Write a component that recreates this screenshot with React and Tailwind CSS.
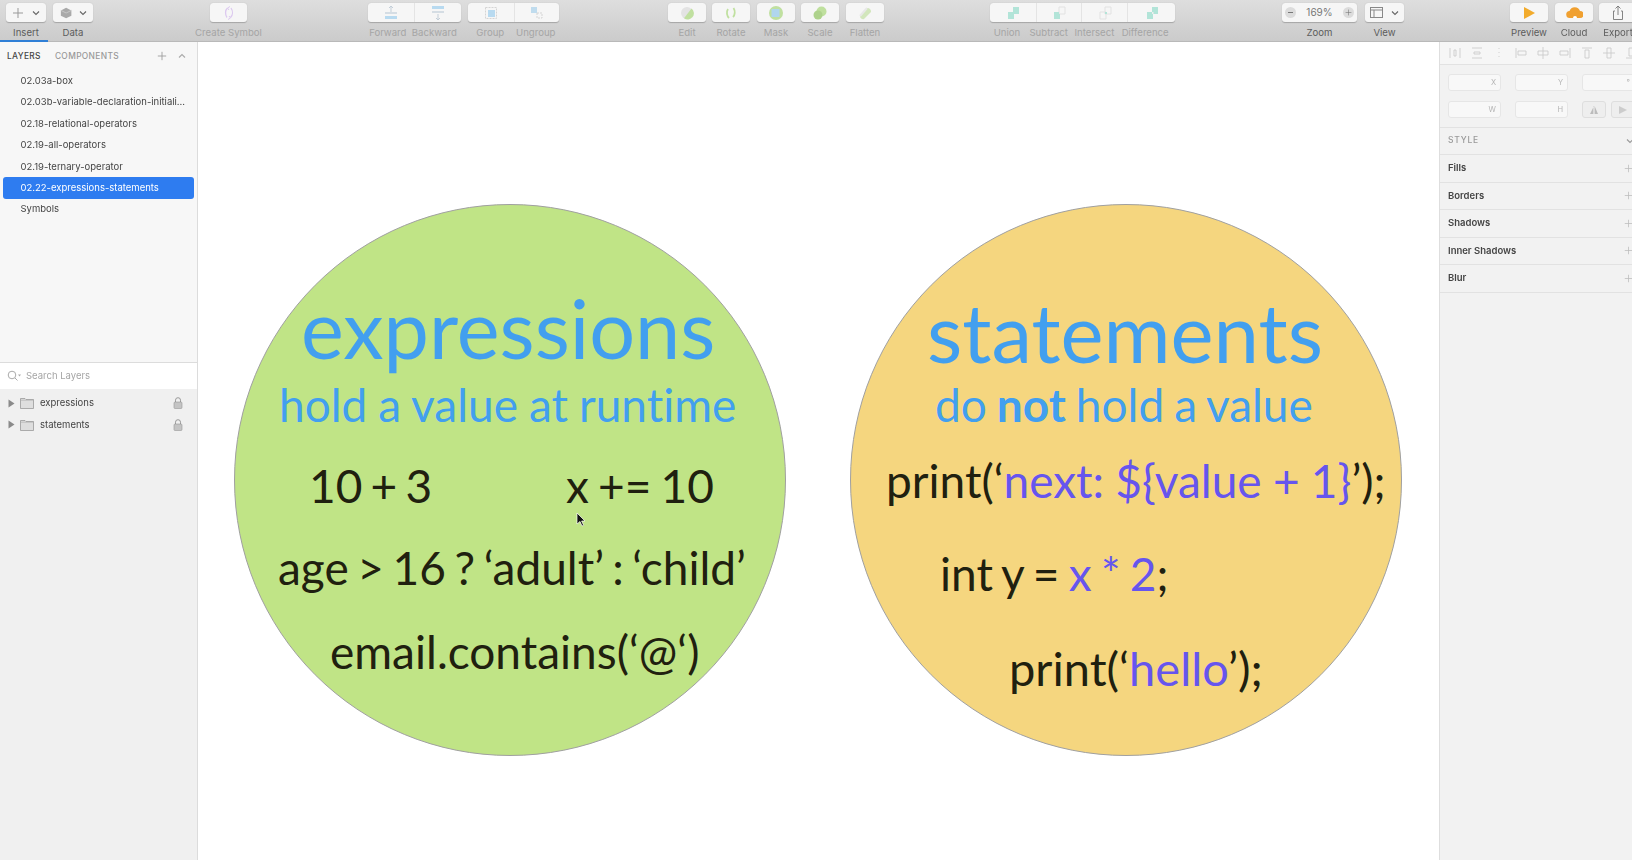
import React from "react";

const Chev = ({ c = "#666", up = false }) => (
  <svg width="8" height="6" viewBox="0 0 8 6"><path d={up ? "M1 4.5l3-3 3 3" : "M1 1.5l3 3 3-3"} fill="none" stroke={c} strokeWidth="1.1" /></svg>
);
const Plus = ({ s = 12, c = "#aaa" }) => (
  <svg width={s} height={s} viewBox="0 0 12 12"><path d="M6 1v10M1 6h10" stroke={c} strokeWidth="1" /></svg>
);
const Shape = ({ children, w = 16 }) => (
  <svg width={w} height="16" viewBox="0 0 16 16">{children}</svg>
);
const Lock = () => (
  <svg width="10" height="12" viewBox="0 0 10 12"><path d="M2.5 5V3.2a2.5 2.5 0 0 1 5 0V5" fill="none" stroke="#999" /><rect x="1" y="5" width="8" height="6.5" rx="1" fill="#c4c4c4" stroke="#999" strokeWidth="0.6" /></svg>
);
const Folder = () => (
  <svg width="14" height="12" viewBox="0 0 14 12"><path d="M0.5 1.5h4.5l1 1h7.5v9h-13z" fill="#dedede" stroke="#9a9a9a" strokeWidth="0.8" /><path d="M0.5 3.2h13" stroke="#aaa" strokeWidth="0.6" /></svg>
);
const Tri = () => (
  <svg width="7" height="9" viewBox="0 0 7 9"><path d="M0.5 0.5l6 4-6 4z" fill="#8a8a8a" /></svg>
);
const Cell = ({ className = "", children }) => (
  <div className={`h-full flex items-center justify-center border-r border-[#e4e4e4] last:border-r-0 ${className}`}>{children}</div>
);

// A toolbar item: the button on top, its label(s) underneath.
const Tool = ({ className = "", btn = "justify-center", labels, dark = false, children }) => (
  <div className={`shrink-0 flex flex-col ${className}`}>
    <div className={`h-[19px] bg-[#f6f6f6] rounded-[3px] shadow-[0_0.5px_1px_rgba(0,0,0,0.22)] flex items-center ${btn}`}>
      {children}
    </div>
    <div className={`flex mt-[5px] text-[9.6px] leading-[12px] whitespace-nowrap ${dark ? "text-[#5c5c5c]" : "text-[#a5a5a5]"}`}>
      {labels.map(([t, w]) => (
        <div key={t} className={`flex justify-center min-w-0 ${w || "flex-1"}`}>{t}</div>
      ))}
    </div>
  </div>
);

function Toolbar() {
  return (
    <div className="relative h-[42px] shrink-0 bg-gradient-to-b from-[#dedede] to-[#cbcbcb] border-b border-[#b9b9b9] font-['Inter',sans-serif] [filter:blur(0.35px)]">
      <div className="flex items-start pt-[3px] pl-[6px]">
        <Tool className="w-[40px]" btn="justify-center gap-[8px]" dark labels={[["Insert"]]}><Plus c="#999" /><Chev /></Tool>
        <Tool className="w-[40px] ml-[7px]" btn="justify-center gap-[5px]" dark labels={[["Data"]]}>
          <Shape w={14}><path d="M7 2l6 3v6l-6 3-6-3V5z" fill="#a9a9a9" /><path d="M1 5l6 3 6-3" fill="none" stroke="#c9c9c9" /></Shape>
          <Chev />
        </Tool>
        <Tool className="w-[37px] ml-[117px]" labels={[["Create Symbol"]]}>
          <Shape><path d="M6.5 3C4 5 4 10 6 12.5M9.5 12.5C12 10 12 6 10 3" fill="none" stroke="#dcc9ef" strokeWidth="1.3" /><path d="M9 1.5l-2.5 1.5L8 5M7 14.5l2.5-1.5L8 11" fill="none" stroke="#dcc9ef" /></Shape>
        </Tool>
        <Tool className="w-[93px] ml-[121px]" labels={[["Forward", "w-[40px]"], ["Backward", "w-[54px]"]]}>
          <Cell className="w-[47px]">
            <Shape><path d="M8 1v6M6 3l2-2 2 2" fill="none" stroke="#c3ced8" /><rect x="2" y="7" width="12" height="2" fill="#d5dde4" /><rect x="2" y="11" width="12" height="3" fill="#b8daf0" /></Shape>
          </Cell>
          <Cell className="flex-1">
            <Shape><rect x="2" y="1" width="12" height="3" fill="#b8daf0" /><rect x="2" y="6" width="12" height="2" fill="#d5dde4" /><path d="M8 9v6M6 13l2 2 2-2" fill="none" stroke="#c3ced8" /></Shape>
          </Cell>
        </Tool>
        <Tool className="w-[91px] ml-[7px]" labels={[["Group", "w-[46px]"], ["Ungroup", "w-[48px]"]]}>
          <Cell className="w-[47px]">
            <Shape><rect x="2.5" y="2.5" width="11" height="11" fill="none" stroke="#d4d4d4" strokeDasharray="2 1" /><rect x="5" y="5" width="7" height="7" fill="#b8daf0" /></Shape>
          </Cell>
          <Cell className="flex-1">
            <Shape><rect x="2" y="2" width="6" height="6" fill="#c0dcee" /><rect x="8" y="8" width="5" height="5" fill="none" stroke="#d4d4d4" strokeDasharray="2 1" /></Shape>
          </Cell>
        </Tool>
        <Tool className="w-[38px] ml-[109px]" labels={[["Edit"]]}>
          <Shape><circle cx="8" cy="8" r="6" fill="#e3e3e3" /><path d="M12.5 3.5A6 6 0 0 1 5 13.2z" fill="#c0e0a0" /></Shape>
        </Tool>
        <Tool className="w-[38px] ml-[6px]" labels={[["Rotate"]]}>
          <Shape><path d="M5 4C3 7 4 11 6 13M10.5 3c2 3 1.5 7-.5 9" fill="none" stroke="#c0e0a0" strokeWidth="1.8" /></Shape>
        </Tool>
        <Tool className="w-[38px] ml-[7px]" labels={[["Mask"]]}>
          <Shape><circle cx="8" cy="8" r="7" fill="#c0e0a0" /><rect x="3.5" y="4" width="8" height="8" fill="#b0d6ee" /></Shape>
        </Tool>
        <Tool className="w-[38px] ml-[6px]" labels={[["Scale"]]}>
          <Shape><circle cx="9.5" cy="6.5" r="5" fill="#bfe09e" /><circle cx="6" cy="10" r="4.5" fill="#aed28c" /></Shape>
        </Tool>
        <Tool className="w-[38px] ml-[7px]" labels={[["Flatten"]]}>
          <Shape><path d="M3 11L10 3a3.5 3.5 0 0 1 4 4l-7 7a3 3 0 0 1-4-3z" fill="#d2e6bc" /><path d="M3 11l7-8" stroke="#e8e8e8" strokeWidth="2" /></Shape>
        </Tool>
        <Tool
          className="w-[185px] ml-[106px]"
          labels={[["Union", "w-[34px]"], ["Subtract", "w-[50px]"], ["Intersect", "w-[42px]"], ["Difference", "w-[60px]"]]}
        >
          <Cell className="w-[47px]"><Shape><path d="M8 2h6v7H8zM3 7h6v7H3z" fill="#b2e4d8" /></Shape></Cell>
          <Cell className="w-[45px]"><Shape><path d="M8 2h6v7H8z" fill="none" stroke="#e2e2e2" /><path d="M3 7h5v2h1v5H3z" fill="#b2e4d8" /></Shape></Cell>
          <Cell className="w-[46px]"><Shape><path d="M8 2h6v7H8zM3 7h6v7H3z" fill="none" stroke="#e2e2e2" /><rect x="8" y="7" width="2" height="2" fill="#b2e4d8" /></Shape></Cell>
          <Cell className="flex-1"><Shape><path d="M8 2h6v7H8zM3 7h6v7H3z" fill="#b2e4d8" /><rect x="8" y="7" width="1.5" height="2" fill="#eee" /></Shape></Cell>
        </Tool>
        <Tool className="w-[75px] ml-[107px]" btn="text-[10px] text-[#777] justify-between px-[3px]" dark labels={[["Zoom"]]}>
          <div className="w-[11px] h-[11px] rounded-full bg-[#dcdcdc] flex items-center justify-center"><div className="w-[5px] h-px bg-[#777]" /></div>
          <span>169%</span>
          <div className="w-[11px] h-[11px] rounded-full bg-[#dcdcdc] flex items-center justify-center"><Plus s={7} c="#777" /></div>
        </Tool>
        <Tool className="w-[39px] ml-[8px]" btn="justify-center gap-[8px]" dark labels={[["View"]]}>
          <svg width="13" height="11" viewBox="0 0 13 11"><rect x="0.5" y="0.5" width="12" height="10" fill="none" stroke="#888" /><path d="M0.5 3h12M4 3v7.5" stroke="#888" /></svg>
          <Chev />
        </Tool>
        <Tool className="w-[38px] ml-[106px]" dark labels={[["Preview"]]}>
          <Shape><path d="M3 2l11 6-11 6z" fill="#f2ab2c" /></Shape>
        </Tool>
        <Tool className="w-[38px] ml-[7px]" dark labels={[["Cloud"]]}>
          <Shape w={18}><path d="M4 13a3.5 3.5 0 0 1-.5-7 5.5 5.5 0 0 1 10.5 0 3.5 3.5 0 0 1 0 7z" fill="#f0a030" /><path d="M7 13a2 2 0 0 1 4 0z" fill="#fff" /></Shape>
        </Tool>
        <Tool className="w-[38px] ml-[6px]" dark labels={[["Export"]]}>
          <Shape><path d="M8 1v9M5.5 3.5L8 1l2.5 2.5M5 6H3.5v8.5h9V6H11" fill="none" stroke="#777" strokeWidth="0.9" /></Shape>
        </Tool>
      </div>
      <div className="absolute left-0 bottom-[-1px] w-[48px] h-[2px] bg-[#2f7fd6]" />
    </div>
  );
}

const pages = [
  "02.03a-box",
  "02.03b-variable-declaration-initiali...",
  "02.18-relational-operators",
  "02.19-all-operators",
  "02.19-ternary-operator",
  "02.22-expressions-statements",
  "Symbols",
];

function LeftPanel() {
  return (
    <div className="w-[198px] shrink-0 flex flex-col border-r border-[#dcdcdc] font-['Inter',sans-serif] [filter:blur(0.3px)]">
      <div className="h-[320px] shrink-0 bg-[#f7f7f7] flex flex-col">
        <div className="h-[28px] flex items-center pl-[7px] pr-[11px] text-[8.4px] tracking-[0.35px] font-medium">
          <span className="text-[#444]">LAYERS</span>
          <span className="ml-[14px] text-[#999]">COMPONENTS</span>
          <div className="ml-auto flex items-center gap-[11px]">
            <Plus s={10} c="#999" />
            <Chev c="#aaa" up />
          </div>
        </div>
        <div className="flex flex-col px-[3px] mt-[0.5px]">
          {pages.map((p, i) => (
            <div
              key={p}
              className={`h-[21.4px] flex items-center pl-[17.5px] rounded-[3px] text-[9.5px] whitespace-nowrap ${i === 5 ? "bg-[#2e7cf0] text-white" : "text-[#444]"}`}
            >
              {p}
            </div>
          ))}
        </div>
      </div>
      <div className="h-[1px] bg-[#dcdcdc]" />
      <div className="h-[26px] bg-white flex items-center pl-[7px] gap-[5px] text-[9.5px] text-[#a5a5a5]">
        <svg width="14" height="12" viewBox="0 0 14 12"><circle cx="5" cy="5" r="3.8" fill="none" stroke="#aaa" /><path d="M8 8l2.5 2.5" stroke="#aaa" /><path d="M11 4.5h3l-1.5 2z" fill="#aaa" /></svg>
        <span>Search Layers</span>
      </div>
      <div className="flex-1 bg-[#f0f0f0] pt-[3.5px] flex flex-col">
        {["expressions", "statements"].map((n) => (
          <div key={n} className="h-[21.6px] flex items-center pl-[8px] pr-[14px] text-[9.5px] text-[#444]">
            <Tri />
            <span className="ml-[5px] flex"><Folder /></span>
            <span className="ml-[6px]">{n}</span>
            <span className="ml-auto flex"><Lock /></span>
          </div>
        ))}
      </div>
    </div>
  );
}

const align = [
  <path d="M2 2v10M12 2v10M6 4h2v6H6z" />,
  <path d="M2 2h10M2 12h10M4 6h6v2H4z" />,
  <path d="M7 2v1M7 6v1M7 10v1" />,
  <path d="M2 2v10M4 5h8v4H4z" />,
  <path d="M7 1v12M2 5h10v4H2z" />,
  <path d="M12 2v10M2 5h8v4H2z" />,
  <path d="M2 2h10M5 4h4v8H5z" />,
  <path d="M1 7h12M5 2h4v10H5z" />,
  <path d="M2 12h10M5 2h4v8H5z" />,
];

const Field = ({ l }) => (
  <div className="w-[53px] h-[17px] bg-[#f8f8f8] border border-[#e6e6e6] rounded-[3px] flex items-center justify-end pr-[4px] text-[7.5px] text-[#b5b5b5] shrink-0">{l}</div>
);

function RightPanel() {
  return (
    <div className="w-[193px] shrink-0 bg-[#f2f2f2] border-l border-[#dedede] font-['Inter',sans-serif] overflow-hidden [filter:blur(0.3px)]">
      <div className="h-[23px] bg-[#f6f6f6] border-b border-[#e2e2e2] flex items-center pl-[8px] gap-[8px]">
        {align.map((d, i) => (
          <svg key={i} width="14" height="14" viewBox="0 0 14 14" fill="none" stroke="#c8c8c8" strokeWidth="0.8" className="shrink-0">{d}</svg>
        ))}
      </div>
      <div className="h-[62.5px] border-b border-[#e2e2e2] pt-[9px] pl-[8px] flex flex-col gap-[10px]">
        <div className="flex gap-[14px]"><Field l="X" /><Field l="Y" /><Field l="°" /></div>
        <div className="flex gap-[14px]">
          <Field l="W" /><Field l="H" />
          <div className="flex gap-[5px] shrink-0">
            <div className="w-[24px] h-[17px] bg-[#eeeeee] border border-[#dedede] rounded-[3px] flex items-center justify-center">
              <svg width="10" height="10" viewBox="0 0 10 10"><path d="M5 1L1 9h3.4V1zM5.6 1v8H9z" fill="#bbb" /></svg>
            </div>
            <div className="w-[24px] h-[17px] bg-[#eeeeee] border border-[#dedede] rounded-[3px] flex items-center justify-center">
              <svg width="10" height="10" viewBox="0 0 10 10"><path d="M1 1l8 4-8 4z" fill="#ccc" /></svg>
            </div>
          </div>
        </div>
      </div>
      <div className="h-[27.5px] border-b border-[#e2e2e2] flex items-center pl-[8px] text-[8.5px] tracking-[0.8px] font-medium text-[#999]">
        STYLE
        <span className="ml-auto -mr-[2px] flex"><Chev c="#999" /></span>
      </div>
      {["Fills", "Borders", "Shadows", "Inner Shadows", "Blur"].map((t) => (
        <div key={t} className="h-[27.5px] border-b border-[#e2e2e2] flex items-center pl-[8px] text-[9.5px] font-semibold text-[#444]">
          {t}
          <span className="ml-auto -mr-[1px] flex"><Plus s={9} c="#bbb" /></span>
        </div>
      ))}
    </div>
  );
}

const Blue = "text-[#429fef]";
const Dark = "text-[#20200f]";
const Purple = "text-[#6655ee]";

function Canvas() {
  return (
    <div className="relative flex-1 bg-white overflow-hidden font-['Lato',sans-serif] [font-variant-ligatures:none] whitespace-nowrap leading-none">
      <div className="absolute left-[36px] top-[162px] w-[552px] h-[552px] rounded-full bg-[#c0e486] border border-[#a0a0a0]" />
      <div className="absolute left-[652px] top-[162px] w-[552px] h-[552px] rounded-full bg-[#f5d67f] border border-[#a0a0a0]" />

      <div className={`absolute left-[103px] top-[245px] text-[81px] ${Blue}`}>expressions</div>
      <div className={`absolute left-[81px] top-[340px] text-[46px] [word-spacing:-0.8px] ${Blue}`}>hold a value at runtime</div>
      <div className={`absolute left-[111px] top-[421px] text-[46px] [word-spacing:-3.6px] ${Dark}`}>10 + 3</div>
      <div className={`absolute left-[368px] top-[421px] text-[46px] [word-spacing:-2.6px] ${Dark}`}>x += 10</div>
      <div className={`absolute left-[80px] top-[503px] text-[46px] [word-spacing:-3.2px] ${Dark}`}>age &gt; 16 ? ‘adult’ : ‘child’</div>
      <div className={`absolute left-[132px] top-[587px] text-[46px] ${Dark}`}>email.contains(‘@‘)</div>

      <div className={`absolute left-[729px] top-[249px] text-[81.5px] ${Blue}`}>statements</div>
      <div className={`absolute left-[737px] top-[340px] text-[46px] [word-spacing:-1.8px] ${Blue}`}>do <b className="font-bold">not</b> hold a value</div>
      <div className={`absolute left-[688px] top-[416px] text-[46px] [word-spacing:-0.5px] ${Dark}`}>print(‘<span className={Purple}>next: ${"{"}value + 1{"}"}</span>’);</div>
      <div className={`absolute left-[742px] top-[509px] text-[46px] [word-spacing:-2.5px] ${Dark}`}>int y = <span className={Purple}>x * 2</span>;</div>
      <div className={`absolute left-[811px] top-[603px] text-[47px] ${Dark}`}>print(‘<span className={Purple}>hello</span>’);</div>

      <svg className="absolute left-[378px] top-[470px]" width="10" height="16" viewBox="0 0 10 16">
        <path d="M1 1v11l3-2.5 2 4.5 1.6-.8-2-4.2H9z" fill="#111" stroke="#fff" strokeWidth="0.7" />
      </svg>
    </div>
  );
}

export default function App() {
  return (
    <div className="w-[1632px] h-[860px] flex flex-col overflow-hidden bg-white">
      <Toolbar />
      <div className="flex flex-1 min-h-0">
        <LeftPanel />
        <Canvas />
        <RightPanel />
      </div>
    </div>
  );
}
